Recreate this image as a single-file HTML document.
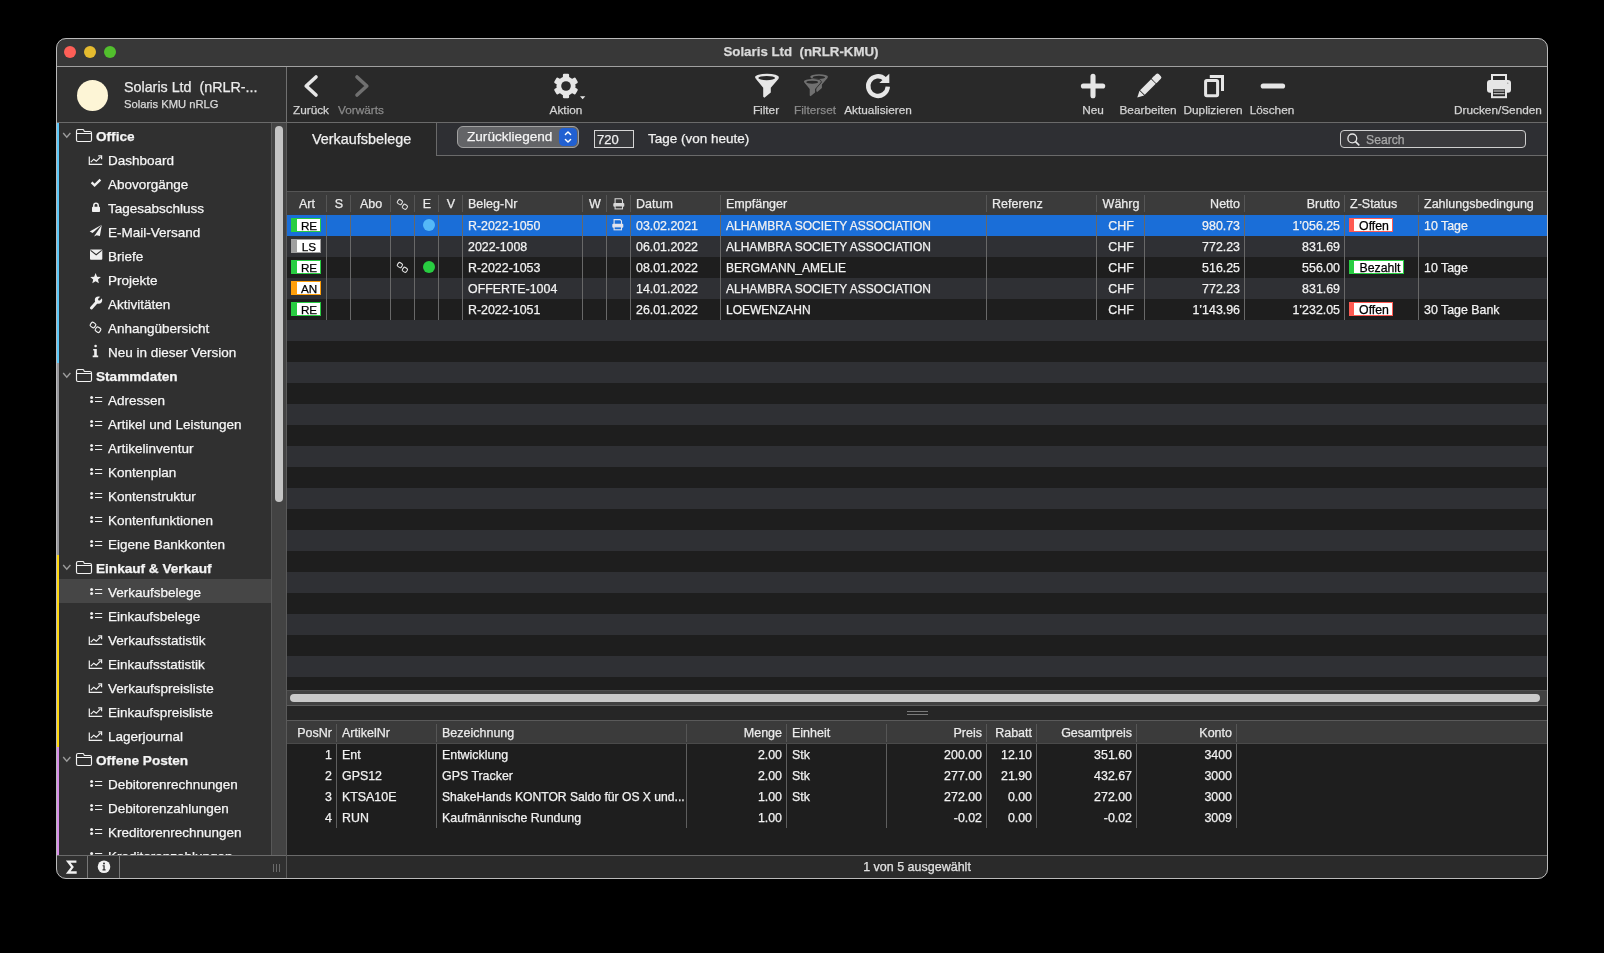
<!DOCTYPE html><html><head><meta charset="utf-8"><style>*{margin:0;padding:0;box-sizing:content-box}
html,body{width:1604px;height:953px;overflow:hidden;background:#000}
body{position:relative;font-family:"Liberation Sans",sans-serif;-webkit-font-smoothing:antialiased}
div{position:absolute}
.t{will-change:transform;-webkit-text-stroke:0.25px currentColor}</style></head><body><div id="win" style="left:0;top:0;width:1604px;height:953px;clip-path:inset(38px 56px 74px 56px round 10px);">
<div style="left:56px;top:38px;width:1492px;height:28px;background:#383838"></div>
<div class="t" style="left:501px;width:600px;text-align:center;top:43.81px;font-size:13.3px;line-height:15.96px;color:#d9d9d9;font-weight:700;white-space:nowrap;">Solaris Ltd&nbsp; (nRLR-KMU)</div>
<div style="left:64px;top:46px;width:12px;height:12px;background:#fe5f57;border-radius:50%"></div>
<div style="left:84px;top:46px;width:12px;height:12px;background:#e5bb2f;border-radius:50%"></div>
<div style="left:104px;top:46px;width:12px;height:12px;background:#52bf2d;border-radius:50%"></div>
<div style="left:56px;top:66px;width:1492px;height:1px;background:#a0a0a0"></div>
<div style="left:56px;top:67px;width:230px;height:55px;background:#2f2f2f"></div>
<div style="left:76.5px;top:79.5px;width:31px;height:31px;background:#fdf5d6;border-radius:50%"></div>
<div class="t" style="left:124px;top:79.07px;font-size:14.3px;line-height:17.16px;color:#ebebeb;font-weight:400;white-space:nowrap;">Solaris Ltd&nbsp; (nRLR-...</div>
<div class="t" style="left:124px;top:98.00px;font-size:11.2px;line-height:13.44px;color:#dadada;font-weight:400;white-space:nowrap;">Solaris KMU nRLG</div>
<div style="left:287px;top:67px;width:1261px;height:55px;background:#292929"></div>
<div style="left:286px;top:67px;width:1px;height:55px;background:#707070"></div>
<div style="left:56px;top:122px;width:1492px;height:1px;background:#6a6a6a"></div>
<div style="left:56px;top:123px;width:230px;height:732px;background:#303030"></div>
<div style="left:287px;top:123px;width:1261px;height:68px;background:#282828"></div>
<div style="left:437px;top:123px;width:1111px;height:32px;background:#2e2f33"></div>
<div style="left:436px;top:123px;width:1px;height:33px;background:#6a6a6a"></div>
<div style="left:436px;top:155px;width:1112px;height:1px;background:#6a6a6a"></div>
<div style="left:287px;top:191px;width:1261px;height:1px;background:#555"></div>
<div style="left:287px;top:192px;width:1261px;height:23px;background:#3b3b3b"></div>
<div style="left:287px;top:215px;width:1261px;height:21px;background:#1e1e1e"></div>
<div style="left:287px;top:236px;width:1261px;height:21px;background:#2f3034"></div>
<div style="left:287px;top:257px;width:1261px;height:21px;background:#1e1e1e"></div>
<div style="left:287px;top:278px;width:1261px;height:21px;background:#2f3034"></div>
<div style="left:287px;top:299px;width:1261px;height:21px;background:#1e1e1e"></div>
<div style="left:287px;top:320px;width:1261px;height:21px;background:#2f3034"></div>
<div style="left:287px;top:341px;width:1261px;height:21px;background:#1e1e1e"></div>
<div style="left:287px;top:362px;width:1261px;height:21px;background:#2f3034"></div>
<div style="left:287px;top:383px;width:1261px;height:21px;background:#1e1e1e"></div>
<div style="left:287px;top:404px;width:1261px;height:21px;background:#2f3034"></div>
<div style="left:287px;top:425px;width:1261px;height:21px;background:#1e1e1e"></div>
<div style="left:287px;top:446px;width:1261px;height:21px;background:#2f3034"></div>
<div style="left:287px;top:467px;width:1261px;height:21px;background:#1e1e1e"></div>
<div style="left:287px;top:488px;width:1261px;height:21px;background:#2f3034"></div>
<div style="left:287px;top:509px;width:1261px;height:21px;background:#1e1e1e"></div>
<div style="left:287px;top:530px;width:1261px;height:21px;background:#2f3034"></div>
<div style="left:287px;top:551px;width:1261px;height:21px;background:#1e1e1e"></div>
<div style="left:287px;top:572px;width:1261px;height:21px;background:#2f3034"></div>
<div style="left:287px;top:593px;width:1261px;height:21px;background:#1e1e1e"></div>
<div style="left:287px;top:614px;width:1261px;height:21px;background:#2f3034"></div>
<div style="left:287px;top:635px;width:1261px;height:21px;background:#1e1e1e"></div>
<div style="left:287px;top:656px;width:1261px;height:21px;background:#2f3034"></div>
<div style="left:287px;top:677px;width:1261px;height:13px;background:#1e1e1e"></div>
<div style="left:287px;top:215px;width:1261px;height:21px;background:#1a6ed8"></div>
<div style="left:287px;top:690px;width:1261px;height:16px;background:#414141"></div>
<div style="left:287px;top:690px;width:1261px;height:1px;background:#4e4e4e"></div>
<div style="left:287px;top:705px;width:1261px;height:1px;background:#5c5c5c"></div>
<div style="left:290px;top:694px;width:1250px;height:8px;background:#c9c9c9;border-radius:4px"></div>
<div style="left:287px;top:706px;width:1261px;height:15px;background:#262626"></div>
<div style="left:907px;top:711px;width:21px;height:1px;background:#7a7a7a"></div>
<div style="left:907px;top:714px;width:21px;height:1px;background:#7a7a7a"></div>
<div style="left:287px;top:720px;width:1261px;height:1px;background:#5a5a5a"></div>
<div style="left:287px;top:721px;width:1261px;height:22px;background:#3b3b3b"></div>
<div style="left:287px;top:743px;width:1261px;height:1px;background:#4a4a4a"></div>
<div style="left:287px;top:744px;width:1261px;height:111px;background:#1e1e1e"></div>
<div style="left:287px;top:855px;width:1261px;height:1px;background:#6a6a6a"></div>
<div style="left:287px;top:856px;width:1261px;height:23px;background:#2a2a2a"></div>
<div class="t" style="left:617px;width:600px;text-align:center;top:860.47px;font-size:12.5px;line-height:15.0px;color:#e2e2e2;font-weight:400;white-space:nowrap;">1 von 5 ausgewählt</div>
<div style="left:56px;top:855px;width:230px;height:1px;background:#6a6a6a"></div>
<div style="left:56px;top:856px;width:230px;height:23px;background:#303030"></div>
<div style="left:87px;top:856px;width:1px;height:23px;background:#777"></div>
<div style="left:119px;top:856px;width:1px;height:23px;background:#777"></div>
<div style="left:286px;top:123px;width:1px;height:756px;background:#5a5a5a"></div>
<div style="left:56px;top:123px;width:3px;height:240px;background:#5ac8fa"></div>
<div style="left:56px;top:363px;width:3px;height:192px;background:#98989d"></div>
<div style="left:56px;top:555px;width:3px;height:192px;background:#ffd60a"></div>
<div style="left:56px;top:747px;width:3px;height:108px;background:#d88ee9"></div>
<div style="left:59px;top:579px;width:212px;height:24px;background:#464646"></div>
<div style="left:271px;top:123px;width:15px;height:732px;background:#434343"></div>
<div style="left:271px;top:123px;width:1px;height:732px;background:#585858"></div>
<div style="left:274.5px;top:126px;width:8.5px;height:376px;background:#c4c4c4;border-radius:4.25px"></div>
<div style="left:59px;top:123px;width:212px;height:732px;overflow:hidden">
<div class="t" style="left:37px;top:5.53px;font-size:13.6px;line-height:16.32px;color:#f4f4f4;font-weight:700;white-space:nowrap;">Office</div>
<div class="t" style="left:49px;top:29.62px;font-size:13.5px;line-height:16.2px;color:#f6f6f6;font-weight:400;white-space:nowrap;">Dashboard</div>
<div class="t" style="left:49px;top:53.62px;font-size:13.5px;line-height:16.2px;color:#f6f6f6;font-weight:400;white-space:nowrap;">Abovorgänge</div>
<div class="t" style="left:49px;top:77.62px;font-size:13.5px;line-height:16.2px;color:#f6f6f6;font-weight:400;white-space:nowrap;">Tagesabschluss</div>
<div class="t" style="left:49px;top:101.62px;font-size:13.5px;line-height:16.2px;color:#f6f6f6;font-weight:400;white-space:nowrap;">E-Mail-Versand</div>
<div class="t" style="left:49px;top:125.62px;font-size:13.5px;line-height:16.2px;color:#f6f6f6;font-weight:400;white-space:nowrap;">Briefe</div>
<div class="t" style="left:49px;top:149.62px;font-size:13.5px;line-height:16.2px;color:#f6f6f6;font-weight:400;white-space:nowrap;">Projekte</div>
<div class="t" style="left:49px;top:173.62px;font-size:13.5px;line-height:16.2px;color:#f6f6f6;font-weight:400;white-space:nowrap;">Aktivitäten</div>
<div class="t" style="left:49px;top:197.62px;font-size:13.5px;line-height:16.2px;color:#f6f6f6;font-weight:400;white-space:nowrap;">Anhangübersicht</div>
<div class="t" style="left:49px;top:221.62px;font-size:13.5px;line-height:16.2px;color:#f6f6f6;font-weight:400;white-space:nowrap;">Neu in dieser Version</div>
<div class="t" style="left:37px;top:245.53px;font-size:13.6px;line-height:16.32px;color:#f4f4f4;font-weight:700;white-space:nowrap;">Stammdaten</div>
<div class="t" style="left:49px;top:269.62px;font-size:13.5px;line-height:16.2px;color:#f6f6f6;font-weight:400;white-space:nowrap;">Adressen</div>
<div class="t" style="left:49px;top:293.62px;font-size:13.5px;line-height:16.2px;color:#f6f6f6;font-weight:400;white-space:nowrap;">Artikel und Leistungen</div>
<div class="t" style="left:49px;top:317.62px;font-size:13.5px;line-height:16.2px;color:#f6f6f6;font-weight:400;white-space:nowrap;">Artikelinventur</div>
<div class="t" style="left:49px;top:341.62px;font-size:13.5px;line-height:16.2px;color:#f6f6f6;font-weight:400;white-space:nowrap;">Kontenplan</div>
<div class="t" style="left:49px;top:365.62px;font-size:13.5px;line-height:16.2px;color:#f6f6f6;font-weight:400;white-space:nowrap;">Kontenstruktur</div>
<div class="t" style="left:49px;top:389.62px;font-size:13.5px;line-height:16.2px;color:#f6f6f6;font-weight:400;white-space:nowrap;">Kontenfunktionen</div>
<div class="t" style="left:49px;top:413.62px;font-size:13.5px;line-height:16.2px;color:#f6f6f6;font-weight:400;white-space:nowrap;">Eigene Bankkonten</div>
<div class="t" style="left:37px;top:437.53px;font-size:13.6px;line-height:16.32px;color:#f4f4f4;font-weight:700;white-space:nowrap;">Einkauf &amp; Verkauf</div>
<div class="t" style="left:49px;top:461.62px;font-size:13.5px;line-height:16.2px;color:#f6f6f6;font-weight:400;white-space:nowrap;">Verkaufsbelege</div>
<div class="t" style="left:49px;top:485.62px;font-size:13.5px;line-height:16.2px;color:#f6f6f6;font-weight:400;white-space:nowrap;">Einkaufsbelege</div>
<div class="t" style="left:49px;top:509.62px;font-size:13.5px;line-height:16.2px;color:#f6f6f6;font-weight:400;white-space:nowrap;">Verkaufsstatistik</div>
<div class="t" style="left:49px;top:533.62px;font-size:13.5px;line-height:16.2px;color:#f6f6f6;font-weight:400;white-space:nowrap;">Einkaufsstatistik</div>
<div class="t" style="left:49px;top:557.62px;font-size:13.5px;line-height:16.2px;color:#f6f6f6;font-weight:400;white-space:nowrap;">Verkaufspreisliste</div>
<div class="t" style="left:49px;top:581.62px;font-size:13.5px;line-height:16.2px;color:#f6f6f6;font-weight:400;white-space:nowrap;">Einkaufspreisliste</div>
<div class="t" style="left:49px;top:605.62px;font-size:13.5px;line-height:16.2px;color:#f6f6f6;font-weight:400;white-space:nowrap;">Lagerjournal</div>
<div class="t" style="left:37px;top:629.53px;font-size:13.6px;line-height:16.32px;color:#f4f4f4;font-weight:700;white-space:nowrap;">Offene Posten</div>
<div class="t" style="left:49px;top:653.62px;font-size:13.5px;line-height:16.2px;color:#f6f6f6;font-weight:400;white-space:nowrap;">Debitorenrechnungen</div>
<div class="t" style="left:49px;top:677.62px;font-size:13.5px;line-height:16.2px;color:#f6f6f6;font-weight:400;white-space:nowrap;">Debitorenzahlungen</div>
<div class="t" style="left:49px;top:701.62px;font-size:13.5px;line-height:16.2px;color:#f6f6f6;font-weight:400;white-space:nowrap;">Kreditorenrechnungen</div>
<div class="t" style="left:49px;top:725.62px;font-size:13.5px;line-height:16.2px;color:#f6f6f6;font-weight:400;white-space:nowrap;">Kreditorenzahlungen</div>
</div>
<svg style="position:absolute;left:59px;top:123px" width="212" height="732" viewBox="59 123 212 732"><path d="M63.2,133 L66.8,137.1 L70.4,133" fill="none" stroke="#9c9c9c" stroke-width="1.4"/><path d="M76.5,140 V131 Q76.5,129.5 78,129.5 H82.8 Q83.6,129.5 83.9,130.4 L84.3,131.5 H90 Q91.5,131.5 91.5,133 V140 Q91.5,141.5 90,141.5 H78 Q76.5,141.5 76.5,140 Z M76.5,133.5 H91.5" fill="none" stroke="#f2f2f2" stroke-width="1.15"/><path d="M89.3,156.5 V164.4 H102.2" fill="none" stroke="#f0f0f0" stroke-width="1.2"/><path d="M90.8,162.2 L93.8,159.2 L96.3,161.2 L100.6,156.8" fill="none" stroke="#f0f0f0" stroke-width="1.2"/><path d="M98.2,155.9 H101.6 V159.3" fill="none" stroke="#f0f0f0" stroke-width="1.2"/><path d="M91.6,182.4 L94.6,185.4 L100.4,179.6" fill="none" stroke="#f0f0f0" stroke-width="2.3"/><path d="M93.8,207 V205.4 A2.2,2.2 0 0 1 98.2,205.4 V207" fill="none" stroke="#f0f0f0" stroke-width="1.5"/><rect x="92" y="206.8" width="8" height="5.2" rx="0.8" fill="#f0f0f0"/><path d="M101.8,224.7 L89.7,231.4 L92.6,232.9 Z" fill="#f0f0f0"/><path d="M101.8,224.9 L94.0,236.6 L96.6,235.2 L99.9,236.1 Z" fill="#f0f0f0"/><rect x="90" y="249.6" width="12.3" height="10.2" rx="1" fill="#f0f0f0"/><path d="M90.6,250.4 L96.15,254.7 L101.7,250.4" fill="none" stroke="#303030" stroke-width="1.1"/><path d="M95.60,273.10 L97.07,276.68 L100.93,276.97 L97.98,279.47 L98.89,283.23 L95.60,281.20 L92.31,283.23 L93.22,279.47 L90.27,276.97 L94.13,276.68 Z" fill="#f0f0f0"/><path d="M97.2,301.6 L91.4,307.9" stroke="#f0f0f0" stroke-width="2.9" stroke-linecap="round"/><circle cx="98.5" cy="300.1" r="3.7" fill="#f0f0f0"/><path d="M99.2,299.4 L102.6,296" stroke="#303030" stroke-width="2.3" stroke-linecap="round"/><rect x="-2.5" y="-2.4" width="5" height="4.8" rx="1.5" transform="translate(93.0,325.0) rotate(35)" fill="none" stroke="#f0f0f0" stroke-width="1.15"/><rect x="-2.5" y="-2.4" width="5" height="4.8" rx="1.5" transform="translate(98.0,329.7) rotate(35)" fill="none" stroke="#f0f0f0" stroke-width="1.15"/><circle cx="95.6" cy="346" r="1.3" fill="#f0f0f0"/><path d="M93.2,349 H96.8 V355.4 H98.2 V357.3 H92.7 V355.4 H94.2 V350.4 H93.2 Z" fill="#f0f0f0"/><path d="M63.2,373 L66.8,377.1 L70.4,373" fill="none" stroke="#9c9c9c" stroke-width="1.4"/><path d="M76.5,380 V371 Q76.5,369.5 78,369.5 H82.8 Q83.6,369.5 83.9,370.4 L84.3,371.5 H90 Q91.5,371.5 91.5,373 V380 Q91.5,381.5 90,381.5 H78 Q76.5,381.5 76.5,380 Z M76.5,373.5 H91.5" fill="none" stroke="#f2f2f2" stroke-width="1.15"/><circle cx="91.6" cy="397.5" r="1.5" fill="#f0f0f0"/><circle cx="91.6" cy="401.5" r="1.5" fill="#f0f0f0"/><path d="M95,397.5 H102.2 M95,401.5 H102.2" stroke="#f0f0f0" stroke-width="1.15"/><circle cx="91.6" cy="421.5" r="1.5" fill="#f0f0f0"/><circle cx="91.6" cy="425.5" r="1.5" fill="#f0f0f0"/><path d="M95,421.5 H102.2 M95,425.5 H102.2" stroke="#f0f0f0" stroke-width="1.15"/><circle cx="91.6" cy="445.5" r="1.5" fill="#f0f0f0"/><circle cx="91.6" cy="449.5" r="1.5" fill="#f0f0f0"/><path d="M95,445.5 H102.2 M95,449.5 H102.2" stroke="#f0f0f0" stroke-width="1.15"/><circle cx="91.6" cy="469.5" r="1.5" fill="#f0f0f0"/><circle cx="91.6" cy="473.5" r="1.5" fill="#f0f0f0"/><path d="M95,469.5 H102.2 M95,473.5 H102.2" stroke="#f0f0f0" stroke-width="1.15"/><circle cx="91.6" cy="493.5" r="1.5" fill="#f0f0f0"/><circle cx="91.6" cy="497.5" r="1.5" fill="#f0f0f0"/><path d="M95,493.5 H102.2 M95,497.5 H102.2" stroke="#f0f0f0" stroke-width="1.15"/><circle cx="91.6" cy="517.5" r="1.5" fill="#f0f0f0"/><circle cx="91.6" cy="521.5" r="1.5" fill="#f0f0f0"/><path d="M95,517.5 H102.2 M95,521.5 H102.2" stroke="#f0f0f0" stroke-width="1.15"/><circle cx="91.6" cy="541.5" r="1.5" fill="#f0f0f0"/><circle cx="91.6" cy="545.5" r="1.5" fill="#f0f0f0"/><path d="M95,541.5 H102.2 M95,545.5 H102.2" stroke="#f0f0f0" stroke-width="1.15"/><path d="M63.2,565 L66.8,569.1 L70.4,565" fill="none" stroke="#9c9c9c" stroke-width="1.4"/><path d="M76.5,572 V563 Q76.5,561.5 78,561.5 H82.8 Q83.6,561.5 83.9,562.4 L84.3,563.5 H90 Q91.5,563.5 91.5,565 V572 Q91.5,573.5 90,573.5 H78 Q76.5,573.5 76.5,572 Z M76.5,565.5 H91.5" fill="none" stroke="#f2f2f2" stroke-width="1.15"/><circle cx="91.6" cy="589.5" r="1.5" fill="#f0f0f0"/><circle cx="91.6" cy="593.5" r="1.5" fill="#f0f0f0"/><path d="M95,589.5 H102.2 M95,593.5 H102.2" stroke="#f0f0f0" stroke-width="1.15"/><circle cx="91.6" cy="613.5" r="1.5" fill="#f0f0f0"/><circle cx="91.6" cy="617.5" r="1.5" fill="#f0f0f0"/><path d="M95,613.5 H102.2 M95,617.5 H102.2" stroke="#f0f0f0" stroke-width="1.15"/><path d="M89.3,636.5 V644.4 H102.2" fill="none" stroke="#f0f0f0" stroke-width="1.2"/><path d="M90.8,642.2 L93.8,639.2 L96.3,641.2 L100.6,636.8" fill="none" stroke="#f0f0f0" stroke-width="1.2"/><path d="M98.2,635.9 H101.6 V639.3" fill="none" stroke="#f0f0f0" stroke-width="1.2"/><path d="M89.3,660.5 V668.4 H102.2" fill="none" stroke="#f0f0f0" stroke-width="1.2"/><path d="M90.8,666.2 L93.8,663.2 L96.3,665.2 L100.6,660.8" fill="none" stroke="#f0f0f0" stroke-width="1.2"/><path d="M98.2,659.9 H101.6 V663.3" fill="none" stroke="#f0f0f0" stroke-width="1.2"/><path d="M89.3,684.5 V692.4 H102.2" fill="none" stroke="#f0f0f0" stroke-width="1.2"/><path d="M90.8,690.2 L93.8,687.2 L96.3,689.2 L100.6,684.8" fill="none" stroke="#f0f0f0" stroke-width="1.2"/><path d="M98.2,683.9 H101.6 V687.3" fill="none" stroke="#f0f0f0" stroke-width="1.2"/><path d="M89.3,708.5 V716.4 H102.2" fill="none" stroke="#f0f0f0" stroke-width="1.2"/><path d="M90.8,714.2 L93.8,711.2 L96.3,713.2 L100.6,708.8" fill="none" stroke="#f0f0f0" stroke-width="1.2"/><path d="M98.2,707.9 H101.6 V711.3" fill="none" stroke="#f0f0f0" stroke-width="1.2"/><path d="M89.3,732.5 V740.4 H102.2" fill="none" stroke="#f0f0f0" stroke-width="1.2"/><path d="M90.8,738.2 L93.8,735.2 L96.3,737.2 L100.6,732.8" fill="none" stroke="#f0f0f0" stroke-width="1.2"/><path d="M98.2,731.9 H101.6 V735.3" fill="none" stroke="#f0f0f0" stroke-width="1.2"/><path d="M63.2,757 L66.8,761.1 L70.4,757" fill="none" stroke="#9c9c9c" stroke-width="1.4"/><path d="M76.5,764 V755 Q76.5,753.5 78,753.5 H82.8 Q83.6,753.5 83.9,754.4 L84.3,755.5 H90 Q91.5,755.5 91.5,757 V764 Q91.5,765.5 90,765.5 H78 Q76.5,765.5 76.5,764 Z M76.5,757.5 H91.5" fill="none" stroke="#f2f2f2" stroke-width="1.15"/><circle cx="91.6" cy="781.5" r="1.5" fill="#f0f0f0"/><circle cx="91.6" cy="785.5" r="1.5" fill="#f0f0f0"/><path d="M95,781.5 H102.2 M95,785.5 H102.2" stroke="#f0f0f0" stroke-width="1.15"/><circle cx="91.6" cy="805.5" r="1.5" fill="#f0f0f0"/><circle cx="91.6" cy="809.5" r="1.5" fill="#f0f0f0"/><path d="M95,805.5 H102.2 M95,809.5 H102.2" stroke="#f0f0f0" stroke-width="1.15"/><circle cx="91.6" cy="829.5" r="1.5" fill="#f0f0f0"/><circle cx="91.6" cy="833.5" r="1.5" fill="#f0f0f0"/><path d="M95,829.5 H102.2 M95,833.5 H102.2" stroke="#f0f0f0" stroke-width="1.15"/><circle cx="91.6" cy="853.5" r="1.5" fill="#f0f0f0"/><circle cx="91.6" cy="857.5" r="1.5" fill="#f0f0f0"/><path d="M95,853.5 H102.2 M95,857.5 H102.2" stroke="#f0f0f0" stroke-width="1.15"/></svg>
<svg style="position:absolute;left:64px;top:858px" width="16" height="18" viewBox="64 858 16 18"><path d="M76.4,861.7 H68.2 L72.4,867.1 L68.2,872.5 H76.7" fill="none" stroke="#f2f2f2" stroke-width="2.3"/></svg>
<svg style="position:absolute;left:96px;top:859px" width="16" height="16" viewBox="96 859 16 16"><circle cx="104" cy="866.8" r="6.3" fill="#f2f2f2"/><circle cx="104" cy="863.4" r="1" fill="#303030"/><path d="M102.6,865.2 H104.7 V869.3 H105.6 V870.4 H102.5 V869.3 H103.4 V866.3 H102.6 Z" fill="#303030"/></svg>
<div style="left:273px;top:864px;width:1px;height:8px;background:#6a6a6a"></div>
<div style="left:276px;top:864px;width:1px;height:8px;background:#6a6a6a"></div>
<div style="left:279px;top:864px;width:1px;height:8px;background:#6a6a6a"></div>
<div class="t" style="left:10.600000000000023px;width:600px;text-align:center;top:102.83px;font-size:11.8px;line-height:14.16px;color:#d4d4d4;font-weight:400;white-space:nowrap;">Zurück</div>
<div class="t" style="left:61.19999999999999px;width:600px;text-align:center;top:102.83px;font-size:11.8px;line-height:14.16px;color:#8a8a8a;font-weight:400;white-space:nowrap;">Vorwärts</div>
<div class="t" style="left:265.5px;width:600px;text-align:center;top:102.83px;font-size:11.8px;line-height:14.16px;color:#d4d4d4;font-weight:400;white-space:nowrap;">Aktion</div>
<div class="t" style="left:466.29999999999995px;width:600px;text-align:center;top:102.83px;font-size:11.8px;line-height:14.16px;color:#d4d4d4;font-weight:400;white-space:nowrap;">Filter</div>
<div class="t" style="left:515.3px;width:600px;text-align:center;top:102.83px;font-size:11.8px;line-height:14.16px;color:#8a8a8a;font-weight:400;white-space:nowrap;">Filterset</div>
<div class="t" style="left:577.6px;width:600px;text-align:center;top:102.83px;font-size:11.8px;line-height:14.16px;color:#d4d4d4;font-weight:400;white-space:nowrap;">Aktualisieren</div>
<div class="t" style="left:792.5999999999999px;width:600px;text-align:center;top:102.83px;font-size:11.8px;line-height:14.16px;color:#d4d4d4;font-weight:400;white-space:nowrap;">Neu</div>
<div class="t" style="left:848.4000000000001px;width:600px;text-align:center;top:102.83px;font-size:11.8px;line-height:14.16px;color:#d4d4d4;font-weight:400;white-space:nowrap;">Bearbeiten</div>
<div class="t" style="left:913.4000000000001px;width:600px;text-align:center;top:102.83px;font-size:11.8px;line-height:14.16px;color:#d4d4d4;font-weight:400;white-space:nowrap;">Duplizieren</div>
<div class="t" style="left:971.9000000000001px;width:600px;text-align:center;top:102.83px;font-size:11.8px;line-height:14.16px;color:#d4d4d4;font-weight:400;white-space:nowrap;">Löschen</div>
<div class="t" style="left:1198.4px;width:600px;text-align:center;top:102.83px;font-size:11.8px;line-height:14.16px;color:#d4d4d4;font-weight:400;white-space:nowrap;">Drucken/Senden</div>
<svg style="position:absolute;left:287px;top:67px" width="1260" height="55" viewBox="287 67 1260 55"><path d="M316,77 L306.2,86 L316,95" fill="none" stroke="#e6e6e6" stroke-width="3.6" stroke-linecap="round" stroke-linejoin="round"/><path d="M357,77 L366.8,86 L357,95" fill="none" stroke="#707070" stroke-width="3.6" stroke-linecap="round" stroke-linejoin="round"/><circle cx="566" cy="86" r="9.6" fill="#e6e6e6"/><rect x="562.9" y="73.7" width="6.2" height="7" rx="1.2" fill="#e6e6e6" transform="rotate(0 566 86)"/><rect x="562.9" y="73.7" width="6.2" height="7" rx="1.2" fill="#e6e6e6" transform="rotate(60 566 86)"/><rect x="562.9" y="73.7" width="6.2" height="7" rx="1.2" fill="#e6e6e6" transform="rotate(120 566 86)"/><rect x="562.9" y="73.7" width="6.2" height="7" rx="1.2" fill="#e6e6e6" transform="rotate(180 566 86)"/><rect x="562.9" y="73.7" width="6.2" height="7" rx="1.2" fill="#e6e6e6" transform="rotate(240 566 86)"/><rect x="562.9" y="73.7" width="6.2" height="7" rx="1.2" fill="#e6e6e6" transform="rotate(300 566 86)"/><circle cx="566" cy="86" r="4.8" fill="#292929"/><path d="M580,96.2 H585.3 L582.65,99.3 Z" fill="#e6e6e6"/><ellipse cx="767" cy="77.3" rx="12.0" ry="3.5" fill="#e6e6e6"/><path d="M755.40,78.30 L779.00,78.30 L770.80,87.80 L770.80,92.60 L764.40,97.80 L763.20,96.80 L763.20,87.80 Z" fill="#e6e6e6"/><ellipse cx="766.70" cy="78.10" rx="8.40" ry="2.10" fill="#292929"/><ellipse cx="819.1" cy="76.8" rx="8.879999999999999" ry="2.59" fill="#707070"/><path d="M810.52,77.54 L827.98,77.54 L821.91,84.57 L821.91,88.12 L817.18,91.97 L816.29,91.23 L816.29,84.57 Z" fill="#707070"/><ellipse cx="818.88" cy="77.39" rx="6.22" ry="1.55" fill="#292929"/><ellipse cx="812.4" cy="81.6" rx="8.52" ry="2.485" fill="none" stroke="#292929" stroke-width="1.2"/><path d="M804.16,82.31 L820.92,82.31 L815.10,89.05 L815.10,92.46 L810.55,96.16 L809.70,95.44 L809.70,89.05 Z" fill="none" stroke="#292929" stroke-width="1.2"/><ellipse cx="812.4" cy="81.6" rx="8.52" ry="2.485" fill="#707070"/><path d="M804.16,82.31 L820.92,82.31 L815.10,89.05 L815.10,92.46 L810.55,96.16 L809.70,95.44 L809.70,89.05 Z" fill="#707070"/><ellipse cx="812.19" cy="82.17" rx="5.96" ry="1.49" fill="#292929"/><path d="M887.8,86.69999999999999 A9.8,9.8 0 1 1 884.81,79.05" fill="none" stroke="#e6e6e6" stroke-width="4.4"/><path d="M879.3,83 H889.3 V73.7 Z" fill="#e6e6e6"/><path d="M1093,76.2 V95.8 M1083.4,86 H1102.7" stroke="#e6e6e6" stroke-width="5.1" stroke-linecap="round"/><g transform="translate(1137.3,97.6) rotate(-45)"><path d="M0,0 L6.4,-3.3 V3.3 Z" fill="#e6e6e6"/><rect x="7.2" y="-3.3" width="15.6" height="6.6" fill="#e6e6e6"/><rect x="23.6" y="-3.3" width="8.2" height="6.6" rx="1.8" fill="#e6e6e6"/><rect x="23.6" y="-3.3" width="3" height="6.6" fill="#e6e6e6"/></g><rect x="1205.6" y="80.5" width="12" height="15.2" rx="1.2" fill="none" stroke="#e6e6e6" stroke-width="3"/><path d="M1209.8,76.6 H1222.5 V91" fill="none" stroke="#e6e6e6" stroke-width="3"/><path d="M1263.2,86 H1282.6" stroke="#e6e6e6" stroke-width="5.1" stroke-linecap="round"/><rect x="1492" y="75" width="14" height="7" fill="none" stroke="#e6e6e6" stroke-width="2"/><rect x="1487" y="80" width="24" height="12.7" rx="3" fill="#e6e6e6"/><rect x="1492" y="88.3" width="14" height="8.9" fill="#292929" stroke="#e6e6e6" stroke-width="2"/><path d="M1493.5,91 H1504.5 M1493.5,93.7 H1504.5" stroke="#e6e6e6" stroke-width="1.1"/><circle cx="1507.8" cy="83.2" r="0.6" fill="#888"/></svg>
<div class="t" style="left:312.4px;top:130.97px;font-size:14.4px;line-height:17.28px;color:#f0f0f0;font-weight:400;white-space:nowrap;">Verkaufsbelege</div>
<div style="left:457px;top:126px;width:120px;height:20px;background:#636467;border:1px solid #a2a2a2;border-radius:6px"></div>
<div style="left:559px;top:128px;width:18px;height:18px;background:#2160d2;border-radius:4.5px"></div>
<div class="t" style="left:466.7px;top:129.03px;font-size:13.6px;line-height:16.32px;color:#f4f4f4;font-weight:400;white-space:nowrap;">Zurückliegend</div>
<svg style="position:absolute;left:559px;top:128px" width="18" height="18" viewBox="559 128 18 18"><path d="M565.4,134.6 L568,131.9 L570.6,134.6 M565.4,139.4 L568,142.1 L570.6,139.4" fill="none" stroke="#fff" stroke-width="1.4" stroke-linecap="round" stroke-linejoin="round"/></svg>
<div style="left:594px;top:130px;width:38px;height:16px;background:#37383b;border:1px solid #d6d6d6"></div>
<div class="t" style="left:596.5px;top:131.70px;font-size:13px;line-height:15.6px;color:#f0f0f0;font-weight:400;white-space:nowrap;">720</div>
<div class="t" style="left:648px;top:131.32px;font-size:13.5px;line-height:16.2px;color:#f0f0f0;font-weight:400;white-space:nowrap;">Tage (von heute)</div>
<div style="left:1340px;top:130px;width:184px;height:16px;background:#3a3a3d;border:1px solid #cfcfcf;border-radius:4px"></div>
<svg style="position:absolute;left:1344px;top:131px" width="18" height="17" viewBox="1344 131 18 17"><circle cx="1352.3" cy="138.4" r="4.4" fill="none" stroke="#e8e8e8" stroke-width="1.3"/><path d="M1355.5,141.6 L1358.8,144.9" stroke="#e8e8e8" stroke-width="1.6" stroke-linecap="round"/></svg>
<div class="t" style="left:1366.4px;top:132.65px;font-size:12.2px;line-height:14.64px;color:#a8a8a8;font-weight:400;white-space:nowrap;">Search</div>
<div style="left:326px;top:195px;width:1px;height:17px;background:#565656"></div>
<div class="t" style="left:6.75px;width:600px;text-align:center;top:196.77px;font-size:12.5px;line-height:15.0px;color:#ebebeb;font-weight:400;white-space:nowrap;">Art</div>
<div style="left:350px;top:195px;width:1px;height:17px;background:#565656"></div>
<div class="t" style="left:38.5px;width:600px;text-align:center;top:196.77px;font-size:12.5px;line-height:15.0px;color:#ebebeb;font-weight:400;white-space:nowrap;">S</div>
<div style="left:390px;top:195px;width:1px;height:17px;background:#565656"></div>
<div class="t" style="left:70.5px;width:600px;text-align:center;top:196.77px;font-size:12.5px;line-height:15.0px;color:#ebebeb;font-weight:400;white-space:nowrap;">Abo</div>
<div style="left:414px;top:195px;width:1px;height:17px;background:#565656"></div>
<div style="left:438px;top:195px;width:1px;height:17px;background:#565656"></div>
<div class="t" style="left:126.5px;width:600px;text-align:center;top:196.77px;font-size:12.5px;line-height:15.0px;color:#ebebeb;font-weight:400;white-space:nowrap;">E</div>
<div style="left:462px;top:195px;width:1px;height:17px;background:#565656"></div>
<div class="t" style="left:150.5px;width:600px;text-align:center;top:196.77px;font-size:12.5px;line-height:15.0px;color:#ebebeb;font-weight:400;white-space:nowrap;">V</div>
<div style="left:582px;top:195px;width:1px;height:17px;background:#565656"></div>
<div class="t" style="left:468.2px;top:196.77px;font-size:12.5px;line-height:15.0px;color:#ebebeb;font-weight:400;white-space:nowrap;">Beleg-Nr</div>
<div style="left:606px;top:195px;width:1px;height:17px;background:#565656"></div>
<div class="t" style="left:294.5px;width:600px;text-align:center;top:196.77px;font-size:12.5px;line-height:15.0px;color:#ebebeb;font-weight:400;white-space:nowrap;">W</div>
<div style="left:630px;top:195px;width:1px;height:17px;background:#565656"></div>
<div style="left:720px;top:195px;width:1px;height:17px;background:#565656"></div>
<div class="t" style="left:636.2px;top:196.77px;font-size:12.5px;line-height:15.0px;color:#ebebeb;font-weight:400;white-space:nowrap;">Datum</div>
<div style="left:986px;top:195px;width:1px;height:17px;background:#565656"></div>
<div class="t" style="left:726.2px;top:196.77px;font-size:12.5px;line-height:15.0px;color:#ebebeb;font-weight:400;white-space:nowrap;">Empfänger</div>
<div style="left:1096px;top:195px;width:1px;height:17px;background:#565656"></div>
<div class="t" style="left:992.2px;top:196.77px;font-size:12.5px;line-height:15.0px;color:#ebebeb;font-weight:400;white-space:nowrap;">Referenz</div>
<div style="left:1144px;top:195px;width:1px;height:17px;background:#565656"></div>
<div class="t" style="left:820.5px;width:600px;text-align:center;top:196.77px;font-size:12.5px;line-height:15.0px;color:#ebebeb;font-weight:400;white-space:nowrap;">Währg</div>
<div style="left:1244px;top:195px;width:1px;height:17px;background:#565656"></div>
<div class="t" style="left:639.7px;width:600px;text-align:right;top:196.77px;font-size:12.5px;line-height:15.0px;color:#ebebeb;font-weight:400;white-space:nowrap;">Netto</div>
<div style="left:1344px;top:195px;width:1px;height:17px;background:#565656"></div>
<div class="t" style="left:739.7px;width:600px;text-align:right;top:196.77px;font-size:12.5px;line-height:15.0px;color:#ebebeb;font-weight:400;white-space:nowrap;">Brutto</div>
<div style="left:1418px;top:195px;width:1px;height:17px;background:#565656"></div>
<div class="t" style="left:1350.2px;top:196.77px;font-size:12.5px;line-height:15.0px;color:#ebebeb;font-weight:400;white-space:nowrap;">Z-Status</div>
<div class="t" style="left:1424.2px;top:196.77px;font-size:12.5px;line-height:15.0px;color:#ebebeb;font-weight:400;white-space:nowrap;">Zahlungsbedingung</div>
<div style="left:326px;top:215px;width:1px;height:105px;background:#686868"></div>
<div style="left:350px;top:215px;width:1px;height:105px;background:#686868"></div>
<div style="left:390px;top:215px;width:1px;height:105px;background:#686868"></div>
<div style="left:414px;top:215px;width:1px;height:105px;background:#686868"></div>
<div style="left:438px;top:215px;width:1px;height:105px;background:#686868"></div>
<div style="left:462px;top:215px;width:1px;height:105px;background:#686868"></div>
<div style="left:582px;top:215px;width:1px;height:105px;background:#686868"></div>
<div style="left:606px;top:215px;width:1px;height:105px;background:#686868"></div>
<div style="left:630px;top:215px;width:1px;height:105px;background:#686868"></div>
<div style="left:720px;top:215px;width:1px;height:105px;background:#686868"></div>
<div style="left:986px;top:215px;width:1px;height:105px;background:#686868"></div>
<div style="left:1096px;top:215px;width:1px;height:105px;background:#686868"></div>
<div style="left:1144px;top:215px;width:1px;height:105px;background:#686868"></div>
<div style="left:1244px;top:215px;width:1px;height:105px;background:#686868"></div>
<div style="left:1344px;top:215px;width:1px;height:105px;background:#686868"></div>
<div style="left:1418px;top:215px;width:1px;height:105px;background:#686868"></div>
<div style="left:291px;top:218px;width:28px;height:12px;background:#fff;border:1px solid #28cd41"></div>
<div style="left:291px;top:218px;width:6px;height:14px;background:#28cd41"></div>
<div class="t" style="left:8.600000000000023px;width:600px;text-align:center;top:218.53px;font-size:11.7px;line-height:14.04px;color:#000;font-weight:400;white-space:nowrap;">RE</div>
<div style="left:423px;top:219px;width:12px;height:12px;background:#55b8f7;border-radius:50%"></div>
<div class="t" style="left:467.8px;top:218.86px;font-size:12.4px;line-height:14.88px;color:#f2f2f2;font-weight:400;white-space:nowrap;">R-2022-1050</div>
<div class="t" style="left:635.6px;top:218.86px;font-size:12.4px;line-height:14.88px;color:#f2f2f2;font-weight:400;white-space:nowrap;">03.02.2021</div>
<div class="t" style="left:725.6px;top:219.24px;font-size:12.0px;line-height:14.4px;color:#f2f2f2;font-weight:400;white-space:nowrap;">ALHAMBRA SOCIETY ASSOCIATION</div>
<div class="t" style="left:820.5px;width:600px;text-align:center;top:218.86px;font-size:12.4px;line-height:14.88px;color:#f2f2f2;font-weight:400;white-space:nowrap;">CHF</div>
<div class="t" style="left:639.8px;width:600px;text-align:right;top:218.86px;font-size:12.4px;line-height:14.88px;color:#f2f2f2;font-weight:400;white-space:nowrap;">980.73</div>
<div class="t" style="left:739.5px;width:600px;text-align:right;top:218.86px;font-size:12.4px;line-height:14.88px;color:#f2f2f2;font-weight:400;white-space:nowrap;">1’056.25</div>
<div style="left:1349px;top:218px;width:42px;height:12px;background:#fff;border:1px solid #ff5a52"></div>
<div style="left:1349px;top:218px;width:5px;height:14px;background:#ff5a52"></div>
<div class="t" style="left:1074.0px;width:600px;text-align:center;top:219.16px;font-size:12.3px;line-height:14.76px;color:#000;font-weight:400;white-space:nowrap;">Offen</div>
<div class="t" style="left:1423.5px;top:218.86px;font-size:12.4px;line-height:14.88px;color:#f2f2f2;font-weight:400;white-space:nowrap;">10 Tage</div>
<div style="left:291px;top:239px;width:28px;height:12px;background:#fff;border:1px solid #a0a0a0"></div>
<div style="left:291px;top:239px;width:6px;height:14px;background:#a0a0a0"></div>
<div class="t" style="left:8.600000000000023px;width:600px;text-align:center;top:239.53px;font-size:11.7px;line-height:14.04px;color:#000;font-weight:400;white-space:nowrap;">LS</div>
<div class="t" style="left:467.8px;top:239.86px;font-size:12.4px;line-height:14.88px;color:#f2f2f2;font-weight:400;white-space:nowrap;">2022-1008</div>
<div class="t" style="left:635.6px;top:239.86px;font-size:12.4px;line-height:14.88px;color:#f2f2f2;font-weight:400;white-space:nowrap;">06.01.2022</div>
<div class="t" style="left:725.6px;top:240.24px;font-size:12.0px;line-height:14.4px;color:#f2f2f2;font-weight:400;white-space:nowrap;">ALHAMBRA SOCIETY ASSOCIATION</div>
<div class="t" style="left:820.5px;width:600px;text-align:center;top:239.86px;font-size:12.4px;line-height:14.88px;color:#f2f2f2;font-weight:400;white-space:nowrap;">CHF</div>
<div class="t" style="left:639.8px;width:600px;text-align:right;top:239.86px;font-size:12.4px;line-height:14.88px;color:#f2f2f2;font-weight:400;white-space:nowrap;">772.23</div>
<div class="t" style="left:739.5px;width:600px;text-align:right;top:239.86px;font-size:12.4px;line-height:14.88px;color:#f2f2f2;font-weight:400;white-space:nowrap;">831.69</div>
<div style="left:291px;top:260px;width:28px;height:12px;background:#fff;border:1px solid #28cd41"></div>
<div style="left:291px;top:260px;width:6px;height:14px;background:#28cd41"></div>
<div class="t" style="left:8.600000000000023px;width:600px;text-align:center;top:260.53px;font-size:11.7px;line-height:14.04px;color:#000;font-weight:400;white-space:nowrap;">RE</div>
<div style="left:423px;top:261px;width:12px;height:12px;background:#28cd41;border-radius:50%"></div>
<div class="t" style="left:467.8px;top:260.86px;font-size:12.4px;line-height:14.88px;color:#f2f2f2;font-weight:400;white-space:nowrap;">R-2022-1053</div>
<div class="t" style="left:635.6px;top:260.86px;font-size:12.4px;line-height:14.88px;color:#f2f2f2;font-weight:400;white-space:nowrap;">08.01.2022</div>
<div class="t" style="left:725.6px;top:261.24px;font-size:12.0px;line-height:14.4px;color:#f2f2f2;font-weight:400;white-space:nowrap;">BERGMANN_AMELIE</div>
<div class="t" style="left:820.5px;width:600px;text-align:center;top:260.86px;font-size:12.4px;line-height:14.88px;color:#f2f2f2;font-weight:400;white-space:nowrap;">CHF</div>
<div class="t" style="left:639.8px;width:600px;text-align:right;top:260.86px;font-size:12.4px;line-height:14.88px;color:#f2f2f2;font-weight:400;white-space:nowrap;">516.25</div>
<div class="t" style="left:739.5px;width:600px;text-align:right;top:260.86px;font-size:12.4px;line-height:14.88px;color:#f2f2f2;font-weight:400;white-space:nowrap;">556.00</div>
<div style="left:1349px;top:260px;width:53px;height:12px;background:#fff;border:1px solid #28cd41"></div>
<div style="left:1349px;top:260px;width:5px;height:14px;background:#28cd41"></div>
<div class="t" style="left:1079.5px;width:600px;text-align:center;top:261.16px;font-size:12.3px;line-height:14.76px;color:#000;font-weight:400;white-space:nowrap;">Bezahlt</div>
<div class="t" style="left:1423.5px;top:260.86px;font-size:12.4px;line-height:14.88px;color:#f2f2f2;font-weight:400;white-space:nowrap;">10 Tage</div>
<div style="left:291px;top:281px;width:28px;height:12px;background:#fff;border:1px solid #ff9f0a"></div>
<div style="left:291px;top:281px;width:6px;height:14px;background:#ff9f0a"></div>
<div class="t" style="left:8.600000000000023px;width:600px;text-align:center;top:281.53px;font-size:11.7px;line-height:14.04px;color:#000;font-weight:400;white-space:nowrap;">AN</div>
<div class="t" style="left:467.8px;top:281.86px;font-size:12.4px;line-height:14.88px;color:#f2f2f2;font-weight:400;white-space:nowrap;">OFFERTE-1004</div>
<div class="t" style="left:635.6px;top:281.86px;font-size:12.4px;line-height:14.88px;color:#f2f2f2;font-weight:400;white-space:nowrap;">14.01.2022</div>
<div class="t" style="left:725.6px;top:282.24px;font-size:12.0px;line-height:14.4px;color:#f2f2f2;font-weight:400;white-space:nowrap;">ALHAMBRA SOCIETY ASSOCIATION</div>
<div class="t" style="left:820.5px;width:600px;text-align:center;top:281.86px;font-size:12.4px;line-height:14.88px;color:#f2f2f2;font-weight:400;white-space:nowrap;">CHF</div>
<div class="t" style="left:639.8px;width:600px;text-align:right;top:281.86px;font-size:12.4px;line-height:14.88px;color:#f2f2f2;font-weight:400;white-space:nowrap;">772.23</div>
<div class="t" style="left:739.5px;width:600px;text-align:right;top:281.86px;font-size:12.4px;line-height:14.88px;color:#f2f2f2;font-weight:400;white-space:nowrap;">831.69</div>
<div style="left:291px;top:302px;width:28px;height:12px;background:#fff;border:1px solid #28cd41"></div>
<div style="left:291px;top:302px;width:6px;height:14px;background:#28cd41"></div>
<div class="t" style="left:8.600000000000023px;width:600px;text-align:center;top:302.53px;font-size:11.7px;line-height:14.04px;color:#000;font-weight:400;white-space:nowrap;">RE</div>
<div class="t" style="left:467.8px;top:302.86px;font-size:12.4px;line-height:14.88px;color:#f2f2f2;font-weight:400;white-space:nowrap;">R-2022-1051</div>
<div class="t" style="left:635.6px;top:302.86px;font-size:12.4px;line-height:14.88px;color:#f2f2f2;font-weight:400;white-space:nowrap;">26.01.2022</div>
<div class="t" style="left:725.6px;top:303.24px;font-size:12.0px;line-height:14.4px;color:#f2f2f2;font-weight:400;white-space:nowrap;">LOEWENZAHN</div>
<div class="t" style="left:820.5px;width:600px;text-align:center;top:302.86px;font-size:12.4px;line-height:14.88px;color:#f2f2f2;font-weight:400;white-space:nowrap;">CHF</div>
<div class="t" style="left:639.8px;width:600px;text-align:right;top:302.86px;font-size:12.4px;line-height:14.88px;color:#f2f2f2;font-weight:400;white-space:nowrap;">1’143.96</div>
<div class="t" style="left:739.5px;width:600px;text-align:right;top:302.86px;font-size:12.4px;line-height:14.88px;color:#f2f2f2;font-weight:400;white-space:nowrap;">1’232.05</div>
<div style="left:1349px;top:302px;width:42px;height:12px;background:#fff;border:1px solid #ff5a52"></div>
<div style="left:1349px;top:302px;width:5px;height:14px;background:#ff5a52"></div>
<div class="t" style="left:1074.0px;width:600px;text-align:center;top:303.16px;font-size:12.3px;line-height:14.76px;color:#000;font-weight:400;white-space:nowrap;">Offen</div>
<div class="t" style="left:1423.5px;top:302.86px;font-size:12.4px;line-height:14.88px;color:#f2f2f2;font-weight:400;white-space:nowrap;">30 Tage Bank</div>
<svg style="position:absolute;left:287px;top:192px" width="1260" height="130" viewBox="287 192 1260 130"><rect x="-2.3" y="-2.2" width="4.6" height="4.4" rx="1.4" transform="translate(399.9,202.1) rotate(35)" fill="none" stroke="#dcdcdc" stroke-width="1.1"/><rect x="-2.3" y="-2.2" width="4.6" height="4.4" rx="1.4" transform="translate(404.9,206.8) rotate(35)" fill="none" stroke="#dcdcdc" stroke-width="1.1"/><g transform="translate(618.8,203.6)"><path d="M-3.7,-0.6 V-4.9 H2.4 L3.7,-3.6 V-0.6" fill="none" stroke="#d8d8d8" stroke-width="1.1"/><rect x="-5.5" y="-0.7" width="11" height="3.9" rx="1" fill="#d8d8d8"/><rect x="-3.7" y="2.3" width="7.4" height="3" fill="#3b3b3b" stroke="#d8d8d8" stroke-width="1.1"/></g><g transform="translate(617.8,224.5)"><path d="M-3.7,-0.6 V-4.9 H2.4 L3.7,-3.6 V-0.6" fill="none" stroke="#e4e4ec" stroke-width="1.1"/><rect x="-5.5" y="-0.7" width="11" height="3.9" rx="1" fill="#e4e4ec"/><rect x="-3.7" y="2.3" width="7.4" height="3" fill="#1a6ed8" stroke="#e4e4ec" stroke-width="1.1"/></g><rect x="-2.3" y="-2.2" width="4.6" height="4.4" rx="1.4" transform="translate(399.9,265.1) rotate(35)" fill="none" stroke="#e0e0e0" stroke-width="1.1"/><rect x="-2.3" y="-2.2" width="4.6" height="4.4" rx="1.4" transform="translate(404.9,269.8) rotate(35)" fill="none" stroke="#e0e0e0" stroke-width="1.1"/></svg>
<div style="left:336px;top:724px;width:1px;height:18px;background:#565656"></div>
<div style="left:336px;top:744px;width:1px;height:84px;background:#5e5e5e"></div>
<div class="t" style="left:-268.5px;width:600px;text-align:right;top:726.37px;font-size:12.5px;line-height:15.0px;color:#ebebeb;font-weight:400;white-space:nowrap;">PosNr</div>
<div style="left:436px;top:724px;width:1px;height:18px;background:#565656"></div>
<div style="left:436px;top:744px;width:1px;height:84px;background:#5e5e5e"></div>
<div class="t" style="left:342.2px;top:726.37px;font-size:12.5px;line-height:15.0px;color:#ebebeb;font-weight:400;white-space:nowrap;">ArtikelNr</div>
<div style="left:686px;top:724px;width:1px;height:18px;background:#565656"></div>
<div style="left:686px;top:744px;width:1px;height:84px;background:#5e5e5e"></div>
<div class="t" style="left:442.2px;top:726.37px;font-size:12.5px;line-height:15.0px;color:#ebebeb;font-weight:400;white-space:nowrap;">Bezeichnung</div>
<div style="left:786px;top:724px;width:1px;height:18px;background:#565656"></div>
<div style="left:786px;top:744px;width:1px;height:84px;background:#5e5e5e"></div>
<div class="t" style="left:181.5px;width:600px;text-align:right;top:726.37px;font-size:12.5px;line-height:15.0px;color:#ebebeb;font-weight:400;white-space:nowrap;">Menge</div>
<div style="left:886px;top:724px;width:1px;height:18px;background:#565656"></div>
<div style="left:886px;top:744px;width:1px;height:84px;background:#5e5e5e"></div>
<div class="t" style="left:792.2px;top:726.37px;font-size:12.5px;line-height:15.0px;color:#ebebeb;font-weight:400;white-space:nowrap;">Einheit</div>
<div style="left:986px;top:724px;width:1px;height:18px;background:#565656"></div>
<div style="left:986px;top:744px;width:1px;height:84px;background:#5e5e5e"></div>
<div class="t" style="left:381.5px;width:600px;text-align:right;top:726.37px;font-size:12.5px;line-height:15.0px;color:#ebebeb;font-weight:400;white-space:nowrap;">Preis</div>
<div style="left:1036px;top:724px;width:1px;height:18px;background:#565656"></div>
<div style="left:1036px;top:744px;width:1px;height:84px;background:#5e5e5e"></div>
<div class="t" style="left:431.5px;width:600px;text-align:right;top:726.37px;font-size:12.5px;line-height:15.0px;color:#ebebeb;font-weight:400;white-space:nowrap;">Rabatt</div>
<div style="left:1136px;top:724px;width:1px;height:18px;background:#565656"></div>
<div style="left:1136px;top:744px;width:1px;height:84px;background:#5e5e5e"></div>
<div class="t" style="left:531.5px;width:600px;text-align:right;top:726.37px;font-size:12.5px;line-height:15.0px;color:#ebebeb;font-weight:400;white-space:nowrap;">Gesamtpreis</div>
<div style="left:1236px;top:724px;width:1px;height:18px;background:#565656"></div>
<div style="left:1236px;top:744px;width:1px;height:84px;background:#5e5e5e"></div>
<div class="t" style="left:631.5px;width:600px;text-align:right;top:726.37px;font-size:12.5px;line-height:15.0px;color:#ebebeb;font-weight:400;white-space:nowrap;">Konto</div>
<div class="t" style="left:-268.5px;width:600px;text-align:right;top:747.66px;font-size:12.4px;line-height:14.88px;color:#f2f2f2;font-weight:400;white-space:nowrap;">1</div>
<div class="t" style="left:341.5px;top:747.66px;font-size:12.4px;line-height:14.88px;color:#f2f2f2;font-weight:400;white-space:nowrap;">Ent</div>
<div class="t" style="left:441.5px;top:747.66px;font-size:12.4px;line-height:14.88px;color:#f2f2f2;font-weight:400;white-space:nowrap;">Entwicklung</div>
<div class="t" style="left:181.5px;width:600px;text-align:right;top:747.66px;font-size:12.4px;line-height:14.88px;color:#f2f2f2;font-weight:400;white-space:nowrap;">2.00</div>
<div class="t" style="left:791.5px;top:747.66px;font-size:12.4px;line-height:14.88px;color:#f2f2f2;font-weight:400;white-space:nowrap;">Stk</div>
<div class="t" style="left:381.5px;width:600px;text-align:right;top:747.66px;font-size:12.4px;line-height:14.88px;color:#f2f2f2;font-weight:400;white-space:nowrap;">200.00</div>
<div class="t" style="left:431.5px;width:600px;text-align:right;top:747.66px;font-size:12.4px;line-height:14.88px;color:#f2f2f2;font-weight:400;white-space:nowrap;">12.10</div>
<div class="t" style="left:531.5px;width:600px;text-align:right;top:747.66px;font-size:12.4px;line-height:14.88px;color:#f2f2f2;font-weight:400;white-space:nowrap;">351.60</div>
<div class="t" style="left:631.5px;width:600px;text-align:right;top:747.66px;font-size:12.4px;line-height:14.88px;color:#f2f2f2;font-weight:400;white-space:nowrap;">3400</div>
<div class="t" style="left:-268.5px;width:600px;text-align:right;top:768.66px;font-size:12.4px;line-height:14.88px;color:#f2f2f2;font-weight:400;white-space:nowrap;">2</div>
<div class="t" style="left:341.5px;top:768.66px;font-size:12.4px;line-height:14.88px;color:#f2f2f2;font-weight:400;white-space:nowrap;">GPS12</div>
<div class="t" style="left:441.5px;top:768.66px;font-size:12.4px;line-height:14.88px;color:#f2f2f2;font-weight:400;white-space:nowrap;">GPS Tracker</div>
<div class="t" style="left:181.5px;width:600px;text-align:right;top:768.66px;font-size:12.4px;line-height:14.88px;color:#f2f2f2;font-weight:400;white-space:nowrap;">2.00</div>
<div class="t" style="left:791.5px;top:768.66px;font-size:12.4px;line-height:14.88px;color:#f2f2f2;font-weight:400;white-space:nowrap;">Stk</div>
<div class="t" style="left:381.5px;width:600px;text-align:right;top:768.66px;font-size:12.4px;line-height:14.88px;color:#f2f2f2;font-weight:400;white-space:nowrap;">277.00</div>
<div class="t" style="left:431.5px;width:600px;text-align:right;top:768.66px;font-size:12.4px;line-height:14.88px;color:#f2f2f2;font-weight:400;white-space:nowrap;">21.90</div>
<div class="t" style="left:531.5px;width:600px;text-align:right;top:768.66px;font-size:12.4px;line-height:14.88px;color:#f2f2f2;font-weight:400;white-space:nowrap;">432.67</div>
<div class="t" style="left:631.5px;width:600px;text-align:right;top:768.66px;font-size:12.4px;line-height:14.88px;color:#f2f2f2;font-weight:400;white-space:nowrap;">3000</div>
<div class="t" style="left:-268.5px;width:600px;text-align:right;top:789.66px;font-size:12.4px;line-height:14.88px;color:#f2f2f2;font-weight:400;white-space:nowrap;">3</div>
<div class="t" style="left:341.5px;top:789.66px;font-size:12.4px;line-height:14.88px;color:#f2f2f2;font-weight:400;white-space:nowrap;">KTSA10E</div>
<div class="t" style="left:441.5px;top:789.90px;font-size:12.15px;line-height:14.58px;color:#f2f2f2;font-weight:400;white-space:nowrap;">ShakeHands KONTOR Saldo für OS X und...</div>
<div class="t" style="left:181.5px;width:600px;text-align:right;top:789.66px;font-size:12.4px;line-height:14.88px;color:#f2f2f2;font-weight:400;white-space:nowrap;">1.00</div>
<div class="t" style="left:791.5px;top:789.66px;font-size:12.4px;line-height:14.88px;color:#f2f2f2;font-weight:400;white-space:nowrap;">Stk</div>
<div class="t" style="left:381.5px;width:600px;text-align:right;top:789.66px;font-size:12.4px;line-height:14.88px;color:#f2f2f2;font-weight:400;white-space:nowrap;">272.00</div>
<div class="t" style="left:431.5px;width:600px;text-align:right;top:789.66px;font-size:12.4px;line-height:14.88px;color:#f2f2f2;font-weight:400;white-space:nowrap;">0.00</div>
<div class="t" style="left:531.5px;width:600px;text-align:right;top:789.66px;font-size:12.4px;line-height:14.88px;color:#f2f2f2;font-weight:400;white-space:nowrap;">272.00</div>
<div class="t" style="left:631.5px;width:600px;text-align:right;top:789.66px;font-size:12.4px;line-height:14.88px;color:#f2f2f2;font-weight:400;white-space:nowrap;">3000</div>
<div class="t" style="left:-268.5px;width:600px;text-align:right;top:810.66px;font-size:12.4px;line-height:14.88px;color:#f2f2f2;font-weight:400;white-space:nowrap;">4</div>
<div class="t" style="left:341.5px;top:810.66px;font-size:12.4px;line-height:14.88px;color:#f2f2f2;font-weight:400;white-space:nowrap;">RUN</div>
<div class="t" style="left:441.5px;top:810.66px;font-size:12.4px;line-height:14.88px;color:#f2f2f2;font-weight:400;white-space:nowrap;">Kaufmännische Rundung</div>
<div class="t" style="left:181.5px;width:600px;text-align:right;top:810.66px;font-size:12.4px;line-height:14.88px;color:#f2f2f2;font-weight:400;white-space:nowrap;">1.00</div>
<div class="t" style="left:381.5px;width:600px;text-align:right;top:810.66px;font-size:12.4px;line-height:14.88px;color:#f2f2f2;font-weight:400;white-space:nowrap;">-0.02</div>
<div class="t" style="left:431.5px;width:600px;text-align:right;top:810.66px;font-size:12.4px;line-height:14.88px;color:#f2f2f2;font-weight:400;white-space:nowrap;">0.00</div>
<div class="t" style="left:531.5px;width:600px;text-align:right;top:810.66px;font-size:12.4px;line-height:14.88px;color:#f2f2f2;font-weight:400;white-space:nowrap;">-0.02</div>
<div class="t" style="left:631.5px;width:600px;text-align:right;top:810.66px;font-size:12.4px;line-height:14.88px;color:#f2f2f2;font-weight:400;white-space:nowrap;">3009</div>
</div>
<div style="left:56px;top:38px;width:1490px;height:839px;border:1px solid #bababa;border-radius:10px;"></div></body></html>
